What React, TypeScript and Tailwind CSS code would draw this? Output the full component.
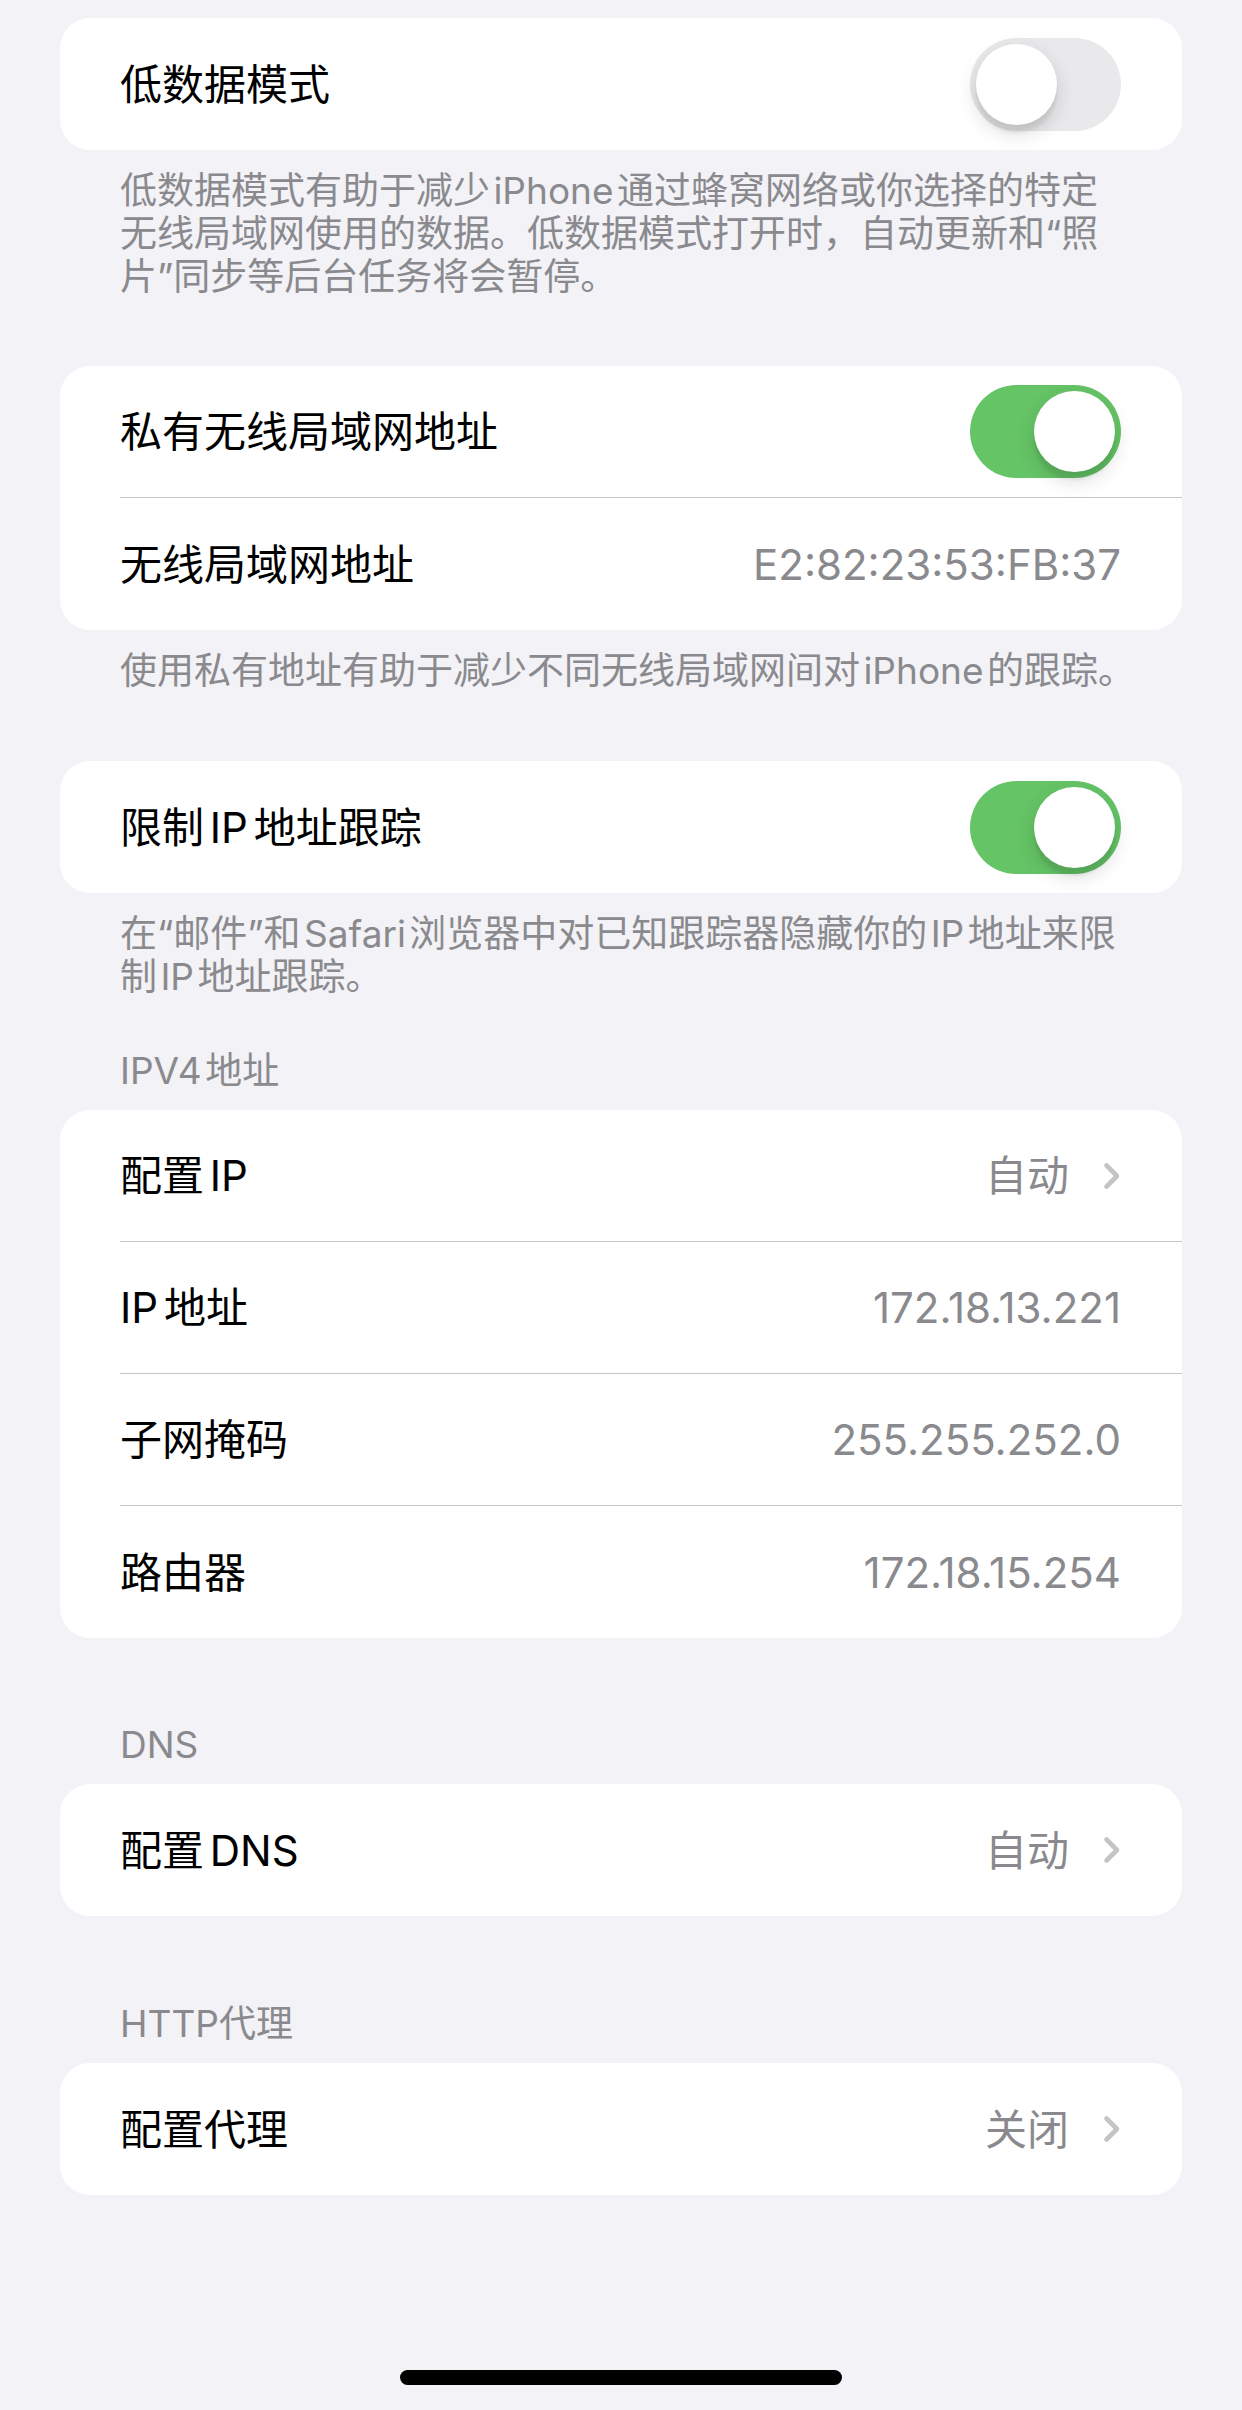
import React from "react";

function Toggle({ on }: { on: boolean }) {
  return (
    <div
      className={
        on
          ? "relative w-[151px] h-[93px] rounded-full bg-[#65c466]"
          : "relative w-[151px] h-[93px] rounded-full bg-[#e9e9eb]"
      }
    >
      <div
        className={
          on
            ? "absolute top-[6px] right-[6px] w-[81px] h-[81px] rounded-full bg-white shadow-[0_8px_20px_rgba(0,0,0,0.15),0_8px_3px_rgba(0,0,0,0.06)]"
            : "absolute top-[6px] left-[6px] w-[81px] h-[81px] rounded-full bg-white shadow-[0_8px_20px_rgba(0,0,0,0.15),0_8px_3px_rgba(0,0,0,0.06)]"
        }
      />
    </div>
  );
}

function Chevron() {
  return (
    <svg width="18" height="28" viewBox="0 0 18 28" className="ml-[34px]">
      <path
        d="M3.5 3.5 L14 14 L3.5 24.5"
        fill="none"
        stroke="#c4c4c7"
        strokeWidth="4.6"
        strokeLinecap="round"
        strokeLinejoin="round"
      />
    </svg>
  );
}

type RowProps = {
  title: string;
  value?: string;
  toggle?: boolean;
  chevron?: boolean;
  last?: boolean;
};

function Row({ title, value, toggle, chevron, last }: RowProps) {
  return (
    <div className="pl-[60px]">
      <div
        className={
          last
            ? "flex items-center justify-between h-[132px] pr-[61px]"
            : "flex items-center justify-between h-[132px] pr-[61px] border-b border-[#c6c6c8]"
        }
      >
        <span className="text-[42px] leading-[51px] text-black whitespace-nowrap [word-spacing:-6px]">{title}</span>
        <div className="flex items-center">
          {value !== undefined && (
            <span className="text-[42px] leading-[51px] text-[#8a8a8e] whitespace-nowrap">{value}</span>
          )}
          {chevron && <Chevron />}
          {toggle !== undefined && <Toggle on={toggle} />}
        </div>
      </div>
    </div>
  );
}

function Card({ children }: { children: React.ReactNode }) {
  return <div className="mx-[60px] bg-white rounded-[30px] overflow-hidden">{children}</div>;
}

function Footnote({ lines, pb }: { lines: string[]; pb: string }) {
  return (
    <div className={`px-[120px] pt-[19px] ${pb}`}>
      {lines.map((l, i) => (
        <div key={i} className="text-[37px] leading-[43px] text-[#8a8a8e] whitespace-nowrap [word-spacing:-7px]">
          {l}
        </div>
      ))}
    </div>
  );
}

function Header({ text, mt }: { text: string; mt: string }) {
  return (
    <div className={`px-[120px] ${mt} pb-[18px]`}>
      <div className="text-[37px] leading-[43px] text-[#8a8a8e] whitespace-nowrap [word-spacing:-7px]">{text}</div>
    </div>
  );
}

export default function App() {
  return (
    <div className="w-[1242px] min-h-[2410px] bg-[#f2f2f7] pt-[18px] flex flex-col font-[Inter,'Noto_Sans_CJK_SC',sans-serif]">
      <Card>
        <Row title="低数据模式" toggle={false} last />
      </Card>
      <Footnote
        pb="pb-[68px]"
        lines={[
          "低数据模式有助于减少 iPhone 通过蜂窝网络或你选择的特定",
          "无线局域网使用的数据。低数据模式打开时，自动更新和“照",
          "片”同步等后台任务将会暂停。",
        ]}
      />
      <Card>
        <Row title="私有无线局域网地址" toggle={true} />
        <Row title="无线局域网地址" value="E2:82:23:53:FB:37" last />
      </Card>
      <Footnote pb="pb-[69px]" lines={["使用私有地址有助于减少不同无线局域网间对 iPhone 的跟踪。"]} />
      <Card>
        <Row title="限制 IP 地址跟踪" toggle={true} last />
      </Card>
      <Footnote
        pb="pb-0"
        lines={["在“邮件”和 Safari 浏览器中对已知跟踪器隐藏你的 IP 地址来限", "制 IP 地址跟踪。"]}
      />
      <Header text="IPV4 地址" mt="mt-[51px]" />
      <Card>
        <Row title="配置 IP" value="自动" chevron />
        <Row title="IP 地址" value="172.18.13.221" />
        <Row title="子网掩码" value="255.255.252.0" />
        <Row title="路由器" value="172.18.15.254" last />
      </Card>
      <Header text="DNS" mt="mt-[85px]" />
      <Card>
        <Row title="配置 DNS" value="自动" chevron last />
      </Card>
      <Header text="HTTP代理" mt="mt-[86px]" />
      <Card>
        <Row title="配置代理" value="关闭" chevron last />
      </Card>
      <div className="flex justify-center mt-[175px] pb-[24px]">
        <div className="w-[442px] h-[15px] rounded-full bg-black" />
      </div>
    </div>
  );
}
